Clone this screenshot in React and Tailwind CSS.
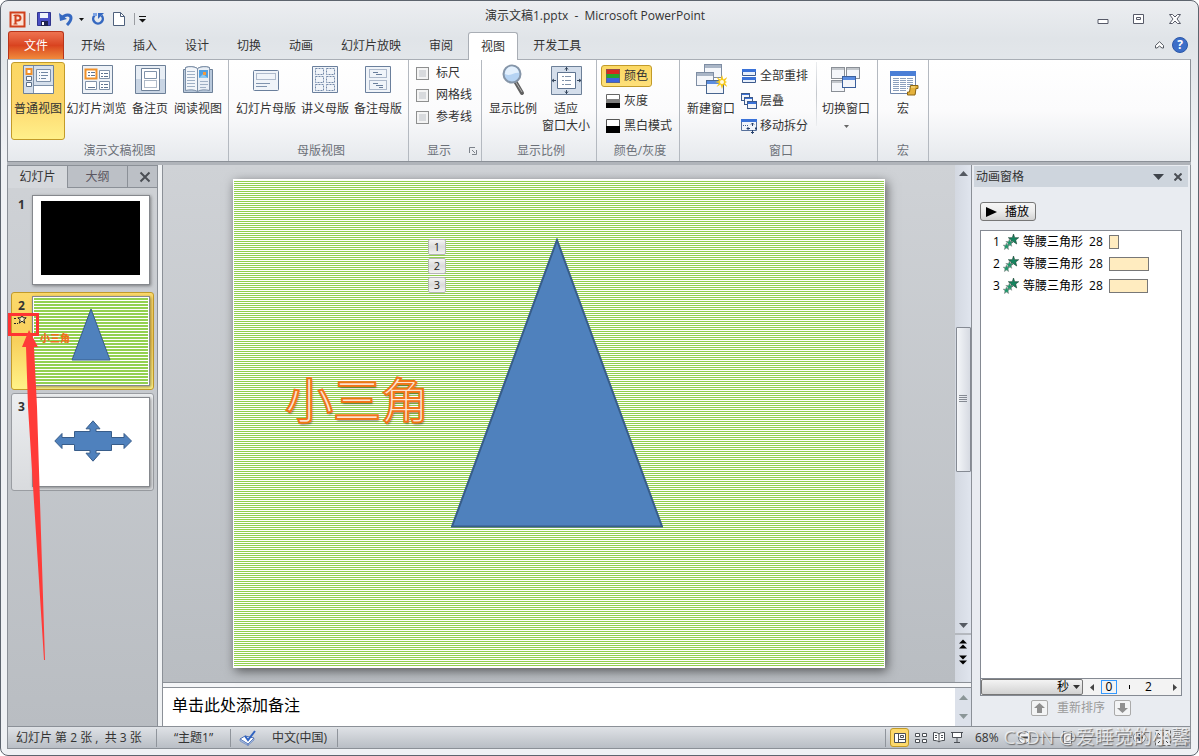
import React from "react";

const TABS = ["开始", "插入", "设计", "切换", "动画", "幻灯片放映", "审阅", "视图", "开发工具"];

const ANIMATIONS = [
  { id: 1, name: "等腰三角形", shape: "28", width: 10 },
  { id: 2, name: "等腰三角形", shape: "28", width: 40 },
  { id: 3, name: "等腰三角形", shape: "28", width: 39 },
];

const FINE_STRIPES =
  "bg-[repeating-linear-gradient(to_bottom,#fff_0px,#fff_1px,#92d050_1px,#92d050_2px)]";
const THUMB_STRIPES =
  "bg-[repeating-linear-gradient(to_bottom,#92d050_0px,#92d050_2px,#fff_2px,#fff_3px)]";

const Svg = ({ w = 32, h = 32, children, className = "" }) => (
  <svg
    width={w}
    height={h}
    viewBox={`0 0 ${w} ${h}`}
    fill="none"
    aria-hidden="true"
    className={`shrink-0 ${className}`}
  >
    {children}
  </svg>
);

/* ---------- ribbon icons ---------- */

const NormalViewIcon = () => (
  <Svg>
    <path d="M1.5 1.5h30v28h-30z" fill="#d5dfeb" stroke="#6d8098" />
    <path d="M11.5 2v27M11.5 21.5H31" stroke="#7d90a8" />
    <path d="M12 22h19v7H12z" fill="#fff" />
    <path d="M14.500 5.500h14v12h-14z" fill="#f7f9fc" stroke="#7d90a8" />
    <path d="M17 8.500h1m1 0h7M17 11.500h1m1 0h7M17 14.500h1m1 0h5" stroke="#7086a3" />
    <path d="M4.500 5h5v5h-5z" fill="#fff" stroke="#f09028" strokeWidth="2" />
    <path d="M4.500 12.500h5v4h-5zM4.500 18.500h5v4h-5z" fill="#fff" stroke="#5d7088" />
  </Svg>
);

const SorterIcon = () => (
  <Svg>
    <path d="M1.500 1.500h30v28h-30z" fill="#eef2f7" stroke="#6d8098" />
    <path d="M18.500 6.500h10v8h-10zM4.500 17.500h11v8h-11zM18.500 17.500h10v8h-10z" fill="#fff" stroke="#8193aa" />
    <path d="M4.500 5.500h11v9h-11z" fill="#fff" stroke="#f09028" strokeWidth="2" />
    <path d="M7 8.500h2m1 0h4M7 11.500h2m1 0h4M20 9.500h2m1 0h4M20 12.500h2m1 0h4M7 23.500h7M20 20.500h2m1 0h4M20 23.500h2m1 0h4" stroke="#5f7490" />
  </Svg>
);

const NotesPageIcon = () => (
  <Svg>
    <path d="M1.500 1.500h30v28h-30z" fill="#c9d5e4" stroke="#6d8098" />
    <path d="M2 2h29v13H2z" fill="#e8eef5" />
    <path d="M7.500 4.500h18v22h-18z" fill="#fff" stroke="#6d8098" />
    <path d="M10.500 7.500h12v7h-12z" stroke="#8193aa" />
    <path d="M10.500 16.500h12v7h-12z" stroke="#5f7490" strokeDasharray="1 1" />
  </Svg>
);

const ReadingIcon = () => (
  <Svg>
    <path d="M1.500 5.500h2v-2c4-1.500 9-1 12 1 3-2 8-2.500 12-1v2h3v23h-29z" fill="#b9c9dc" stroke="#6d8098" />
    <path d="M3.500 3.500c4-1.500 9-1 12 1v23c-3-2-8-2-12-1z" fill="#f3f6fa" stroke="#7d90a8" />
    <path d="M15.500 4.500c3-2 8-2.500 12-1v23c-4-1-9-1-12 1z" fill="#e9eff6" stroke="#7d90a8" />
    <path d="M17 6h9v8h-9z" fill="#4e9fe0" />
    <path d="M17 14l4-4 5 4z" fill="#8cc8f0" />
    <path d="M21 8h3v3h-3z" fill="#f39a3e" />
    <path d="M5 7.500h8M5 10.500h8M5 13.500h8M5 16.500h8M5 19.500h8M5 22.500h8M18 17.500h8M18 20.500h8M18 23.500h6" stroke="#9fb0c5" />
  </Svg>
);

const SlideMasterIcon = () => (
  <Svg>
    <rect x="3.500" y="6.500" width="25" height="20" rx="1" fill="#f0f4f9" stroke="#6a7f9c" />
    <path d="M6.500 9.500h19v6h-19z" stroke="#6a7f9c" strokeDasharray="1 1" />
    <path d="M6 19.500h14M6 22.500h11" stroke="#7f93ae" />
  </Svg>
);

const HandoutIcon = () => (
  <Svg>
    <path d="M3.500 2.500h25v26h-25z" fill="#f0f4f9" stroke="#6a7f9c" />
    <path
      d="M6.500 4.500h8v6h-8zM17.500 4.500h8v6h-8zM6.500 12.500h8v6h-8zM17.500 12.500h8v6h-8zM6.500 20.500h8v6h-8zM17.500 20.500h8v6h-8z"
      stroke="#7389a8"
      strokeDasharray="2 1"
    />
  </Svg>
);

const NotesMasterIcon = () => (
  <Svg>
    <path d="M3.500 2.500h25v26h-25z" fill="#f0f4f9" stroke="#6a7f9c" />
    <path d="M7.500 5.500h17v8h-17zM7.500 16.500h17v9h-17z" stroke="#6a7f9c" strokeDasharray="1 1" />
    <path d="M11 8.500h5m-2 2h6M11 19.500h5m-2 2h7m-4 2h4" stroke="#6a7f9c" />
  </Svg>
);

const ZoomIcon = () => (
  <Svg>
    <path d="M18 17l7 12" stroke="#606060" strokeWidth="4" strokeLinecap="round" />
    <path d="M18 17l7 11" stroke="#b0b0b0" strokeWidth="1" />
    <circle cx="15" cy="10" r="8.500" fill="#b5d3f3" stroke="#8595a8" strokeWidth="2" />
    <path d="M8 10a7 7 0 0 1 14-1c-5-1-8 4-14 1z" fill="#e3f0fd" />
  </Svg>
);

const FitIcon = () => (
  <Svg>
    <path d="M1.500 2.500h30v28h-30z" fill="#d4deeb" stroke="#6d8098" />
    <path d="M7.500 8.500h18v16h-18z" fill="#fff" stroke="#5f7490" />
    <path d="M12 12.500h2m1 0h6M12 16.500h2m1 0h6M12 20.500h2m1 0h6" stroke="#8193aa" />
    <path d="M16.500 3v4M15 5.500l1.500-2 1.500 2M16.500 26v4M15 27.500l1.500 2 1.500-2M2 16.500h4M4 15l-2 1.500L4 18M27 16.500h4M29 15l2 1.500-2 1.500" stroke="#35465c" />
  </Svg>
);

const Pane = ({ x, y, w, h, color, bar, barHeight = 3 }) => (
  <g>
    <rect x={x + 0.5} y={y + 0.5} width={w} height={h} fill="#f4f6fa" stroke={color} />
    <rect x={x + 1} y={y + 1} width={w - 1} height={barHeight} fill={bar} />
  </g>
);

const NewWindowIcon = () => (
  <Svg>
    <Pane x={9} y={0} w={17} h={13} color="#7e8da3" bar="#a9b5c6" />
    <Pane x={1} y={8} w={17} h={13} color="#7e8da3" bar="#a9b5c6" />
    <Pane x={11} y={16} w={17} h={13} color="#48658f" bar="#5a8ce0" />
    <path d="M27 11l1.500 4.500 4-2.500-2.500 4 2 1-2 1 2.500 4-4-2.500-1.500 4.500-1.500-4.500-4 2.500 2.500-4-4-1 4-1-2.500-4 4 2.500z" fill="#f8c91c" />
    <circle cx="27" cy="18" r="2" fill="#fffbe0" />
  </Svg>
);

const SwitchIcon = () => (
  <Svg>
    <Pane x={1} y={3} w={13} h={11} color="#8a8f96" bar="#c2c6cb" barHeight={2} />
    <Pane x={16} y={3} w={13} h={11} color="#8a8f96" bar="#c2c6cb" barHeight={2} />
    <Pane x={1} y={16} w={13} h={11} color="#8a8f96" bar="#c2c6cb" barHeight={2} />
    <Pane x={12} y={12} w={13} h={11} color="#3a5f9c" bar="#5a8ce0" />
  </Svg>
);

const MacroIcon = () => (
  <Svg>
    <path d="M3.500 7.500h25v22h-25z" fill="#fff" stroke="#6f86ab" />
    <path d="M3 7h26v5H3z" fill="#4b7fd6" />
    <path d="M6 14.500h20M6 16.500h20M6 18.500h20M6 20.500h20M6 22.500h20M6 24.500h15M6 26.500h13" stroke="#8ca0bd" strokeDasharray="6 1" />
    <path d="M23.500 21.500h7.500v3h-2l-1 6.500h-7.500v-3h2z" fill="#e5b23c" stroke="#8d6714" />
    <path d="M24 23h4" stroke="#fbe39a" />
  </Svg>
);

const ArrangeIcon = () => (
  <Svg w={16} h={16}>
    <path d="M1.500 1.500h13v6h-13zM1.500 9.500h13v5h-13z" fill="#e8f0fb" stroke="#3c5a8c" />
    <path d="M1 1h14v3H1zM1 9h14v3H1z" fill="#3a72d8" />
  </Svg>
);

const CascadeIcon = () => (
  <Svg w={16} h={16}>
    <Pane x={0} y={0} w={8} h={7} color="#3c5a8c" bar="#3a72d8" barHeight={1} />
    <Pane x={3} y={4} w={8} h={7} color="#3c5a8c" bar="#3a72d8" barHeight={1} />
    <Pane x={6} y={8} w={9} h={7} color="#3c5a8c" bar="#3a72d8" barHeight={2} />
  </Svg>
);

const MoveSplitIcon = () => (
  <Svg w={16} h={16}>
    <path d="M.5 1.500h15v11H.5z" fill="#f0f4fa" stroke="#56709a" />
    <path d="M0 1h16v3H0z" fill="#3a72d8" />
    <path d="M2 7.500h6" stroke="#3c5a8c" strokeDasharray="1 1" />
    <path d="M11.500 5v3M10 6.500l1.500-1.500L13 6.500M11.500 12v3.500M10 14l1.500 1.500L13 14M6 10.500h3M7.500 9L6 10.500 7.500 12M14 10.500h2M14.500 9l1.500 1.500-1.500 1.500" stroke="#26406b" />
  </Svg>
);

const ColorIcon = () => (
  <Svg w={16} h={16}>
    <path d="M1 1h14v14H1z" fill="#3c65e0" />
    <path d="M1 1h14v5H1z" fill="#d62a20" />
    <path d="M1 6h14v4H1z" fill="#27a52c" />
    <path d="M1.500 1.500h13v13h-13z" stroke="#666" strokeOpacity=".6" />
  </Svg>
);

const GrayIcon = () => (
  <Svg w={16} h={16}>
    <path d="M1.500 1.500h13v13h-13z" fill="#fff" stroke="#666" />
    <path d="M1 6h14v5H1z" fill="#808080" />
    <path d="M1 10h14v5H1z" fill="#000" />
  </Svg>
);

const BlackWhiteIcon = () => (
  <Svg w={16} h={16}>
    <path d="M1.500 1.500h13v13h-13z" fill="#fff" stroke="#555" />
    <path d="M1 8h14v7H1z" fill="#000" />
  </Svg>
);

/* ---------- ribbon building blocks ---------- */

const Group = ({ label, className, children, launcher }) => (
  <section
    aria-label={label}
    className={`flex flex-col shrink-0 border-r border-[#b4b9c0] ${className}`}
  >
    <div className="flex flex-1 pt-[2px]">{children}</div>
    <div className="flex items-center h-5 text-[#6b7078]">
      <span className="flex-1 text-center">{label}</span>
      {launcher && (
        <button aria-label="显示选项" className="pr-1">
          <Svg w={8} h={8}>
            <path d="M.5 6V.5H6M3 3l3 3M7.500 3v4.500H3" stroke="#7c828a" />
          </Svg>
        </button>
      )}
    </div>
  </section>
);

const BigButton = ({ icon, children, active, className = "" }) => (
  <button
    className={`flex flex-col items-center h-[78px] pt-px leading-[17px] whitespace-nowrap border rounded-[3px] ${
      active
        ? "border-[#c29b29] bg-linear-to-b from-[#fbd863] via-[#fdd56b] to-[#fff08a]"
        : "border-transparent"
    } ${className}`}
  >
    {icon}
    <span className="mt-1">{children}</span>
  </button>
);

const SmallButton = ({ icon, children, active }) => (
  <button
    className={`flex items-center gap-[3px] h-[22px] px-[3px] whitespace-nowrap border rounded-[3px] ${
      active ? "border-[#c29b29] bg-linear-to-b from-[#fbd863] to-[#fee07a]" : "border-transparent"
    }`}
  >
    {icon}
    {children}
  </button>
);

const Check = ({ id, children }) => (
  <div className="flex items-center gap-[7px] h-[22px]">
    <input
      type="checkbox"
      id={id}
      className="appearance-none w-[13px] h-[13px] border border-[#8e8f8f] bg-[#d8dadd] shadow-[inset_0_0_0_2px_#f4f4f4]"
    />
    <label htmlFor={id}>{children}</label>
  </div>
);

const TitleBar = () => (
  <header className="flex h-7 px-2">
    <div className="flex flex-1 items-center pt-1 gap-[7px]">
      <Svg w={17} h={17}>
        <path d="M1.500 1.500h14v14h-14z" fill="#fbe3d6" stroke="#d0401c" strokeWidth="2" />
        <path d="M6.500 13V4.500H9a2.500 2.500 0 0 1 0 5H7" stroke="#d0401c" strokeWidth="2" />
        <path d="M4.500 4.500h3M4.500 13h4" stroke="#d0401c" />
      </Svg>
      <span className="w-px h-3 -ml-1 bg-[#9a9da2]" />
      <button aria-label="保存">
        <Svg w={14} h={14}>
          <path d="M.5.5h13v13H.5z" fill="#4a4fc4" stroke="#30348c" />
          <path d="M3 1h8v5H3z" fill="#f0f3fb" />
          <path d="M4 9h7v5H4z" fill="#1f2350" />
          <path d="M5 10h2v3H5z" fill="#fff" />
        </Svg>
      </button>
      <button aria-label="撤消" className="flex items-center gap-[6px] pl-px">
        <Svg w={14} h={14}>
          <path d="M3 6c3-4 9-4 9 0 0 3-2 5-4 7" stroke="#3568c0" strokeWidth="3" />
          <path d="M0 1l1 8 7-2z" fill="#3568c0" />
        </Svg>
        <Svg w={5} h={3}>
          <path d="M0 0h5L2.500 3z" fill="#111" />
        </Svg>
      </button>
      <button aria-label="重复">
        <Svg w={14} h={14}>
          <path d="M3.500 3.500a4.800 4.800 0 1 0 7 0" stroke="#3568c0" strokeWidth="2.500" />
          <path d="M7 1h6l-6 6z" fill="#3568c0" />
          <path d="M2 1h4v3H2z" fill="#7ea4e4" />
        </Svg>
      </button>
      <button aria-label="新建" className="px-px">
        <Svg w={12} h={14}>
          <path d="M.5.5h7l4 4v9H.5z" fill="#fff" stroke="#4e607c" />
          <path d="M7.500.5v4h4" stroke="#4e607c" />
        </Svg>
      </button>
      <span className="w-px h-3 ml-px bg-[#9a9da2]" />
      <button aria-label="自定义快速访问工具栏" className="-ml-1">
        <Svg w={8} h={7}>
          <path d="M1 .5h7" stroke="#111" />
          <path d="M1 3h7L4.500 6.500z" fill="#111" />
        </Svg>
      </button>
    </div>
    <h1 className="pt-[3px] leading-5 whitespace-pre">演示文稿1.pptx  -  Microsoft PowerPoint</h1>
    <div className="flex flex-1 items-center justify-end gap-6 pr-[9px] pt-1">
      <button aria-label="最小化">
        <Svg w={12} h={12}>
          <path d="M1 6.500h10v4H1z" fill="#fff" stroke="#575a68" />
        </Svg>
      </button>
      <button aria-label="还原">
        <Svg w={12} h={12}>
          <path d="M.5 1.500h10v9H.5z" fill="#fff" stroke="#575a68" />
          <path d="M3.500 4.500h4v2h-4z" stroke="#575a68" />
        </Svg>
      </button>
      <button aria-label="关闭">
        <Svg w={12} h={12}>
          <path d="M.5 1.500h3L6 4l2.500-2.500h3L8 6l3.500 4.500h-3L6 8l-2.500 2.500h-3L4 6z" fill="#fff" stroke="#575a68" />
        </Svg>
      </button>
    </div>
  </header>
);

const TabStrip = () => (
  <nav className="flex items-end h-7 pl-[7px] pr-2">
    <button className="w-14 h-7 mr-[3px] pt-px rounded-t-[3px] border border-b-0 border-[#b8341a] bg-linear-to-b from-[#ee7350] via-[#d9431f] to-[#f08a3c] text-white">
      文件
    </button>
    {TABS.map((tab) =>
      tab === "视图" ? (
        <button
          key={tab}
          className="relative h-7 -mb-px mx-px px-3 rounded-t-[3px] border border-b-0 border-[#a9aeb5] bg-white"
        >
          {tab}
        </button>
      ) : (
        <button key={tab} className="h-7 px-[14px] pt-[2px]">
          {tab}
        </button>
      )
    )}
    <div className="flex flex-1 items-center justify-end gap-2 h-7 pr-[2px]">
      <button aria-label="折叠功能区">
        <Svg w={9} h={8}>
          <path d="M4.500.7L8.500 4.500v2.500h-1.500L4.500 5 2 7H.5V4.500z" fill="#fff" stroke="#555a62" />
        </Svg>
      </button>
      <button
        aria-label="帮助"
        className="w-4 h-4 rounded-full bg-[#3c6ec8] border border-[#2c58a8] text-white font-bold leading-[14px]"
      >
        ?
      </button>
    </div>
  </nav>
);

const Ribbon = () => (
  <div className="flex h-[103px] ml-[6px] mr-[7px] border border-t-[#a9aeb5] border-x-[#8b9097] border-b-[#8b9097] bg-linear-to-b from-white via-[#fbfbfc] to-[#e6e9ed]">
    <Group label="演示文稿视图" className="w-[221px] pl-[3px]">
      <BigButton icon={<NormalViewIcon />} active className="w-[54px]">普通视图</BigButton>
      <BigButton icon={<SorterIcon />} className="w-[63px]">幻灯片浏览</BigButton>
      <BigButton icon={<NotesPageIcon />} className="w-11">备注页</BigButton>
      <BigButton icon={<ReadingIcon />} className="w-[52px]">阅读视图</BigButton>
    </Group>
    <Group label="母版视图" className="w-[180px] pl-[5px]">
      <BigButton icon={<SlideMasterIcon />} className="w-16">幻灯片母版</BigButton>
      <BigButton icon={<HandoutIcon />} className="w-[54px]">讲义母版</BigButton>
      <BigButton icon={<NotesMasterIcon />} className="w-[52px]">备注母版</BigButton>
    </Group>
    <Group label="显示" className="w-[73px]" launcher>
      <div className="flex flex-col pl-[7px]">
        <Check id="ruler">标尺</Check>
        <Check id="grid">网格线</Check>
        <Check id="guides">参考线</Check>
      </div>
    </Group>
    <Group label="显示比例" className="w-[115px] pl-1">
      <BigButton icon={<ZoomIcon />} className="w-[54px]">显示比例</BigButton>
      <BigButton icon={<FitIcon />} className="w-[52px]">
        适应
        <br />
        窗口大小
      </BigButton>
    </Group>
    <Group label="颜色/灰度" className="w-[83px] pl-1">
      <div className="flex flex-col items-start gap-[3px] pt-[3px]">
        <SmallButton icon={<ColorIcon />} active>颜色</SmallButton>
        <SmallButton icon={<GrayIcon />}>灰度</SmallButton>
        <SmallButton icon={<BlackWhiteIcon />}>黑白模式</SmallButton>
      </div>
    </Group>
    <Group label="窗口" className="w-[198px] pl-[5px]">
      <BigButton icon={<NewWindowIcon />} className="w-[52px]">新建窗口</BigButton>
      <div className="flex flex-col items-start gap-[3px] pt-[3px]">
        <SmallButton icon={<ArrangeIcon />}>全部重排</SmallButton>
        <SmallButton icon={<CascadeIcon />}>层叠</SmallButton>
        <SmallButton icon={<MoveSplitIcon />}>移动拆分</SmallButton>
      </div>
      <div className="w-px h-16 ml-1 bg-linear-to-b from-[#eceef0] via-[#c4c8cd] to-[#eceef0]" />
      <BigButton icon={<SwitchIcon />} className="ml-[3px] w-[52px]">
        切换窗口
        <Svg w={5} h={3} className="mx-auto mt-2">
          <path d="M0 0h5L2.500 3z" fill="#666" />
        </Svg>
      </BigButton>
    </Group>
    <Group label="宏" className="w-[51px]">
      <BigButton icon={<MacroIcon />} className="w-full">宏</BigButton>
    </Group>
  </div>
);

/* ---------- slide list ---------- */

const Thumb = ({ number, frame, children }) => (
  <li className={`flex h-[98px] w-[143px] rounded-[3px] border ${frame}`}>
    <div className="w-5 pt-[5px] pl-[6px] text-[#333]">
      <b className="block leading-4">{number}</b>
      {number === 2 && (
        <Svg w={13} h={11} className="-ml-1">
          <path d="M8 .8l1.200 3h3l-2.400 2 1 3.400-2.800-2-2.800 2 1-3.400-2.400-2h3z" fill="#fff3c0" stroke="#222" />
          <path d="M0 1.500h4M0 4.500h2M0 9.500h4" stroke="#222" strokeDasharray="2 1" />
        </Svg>
      )}
    </div>
    <div className="w-[118px] h-[90px] mt-[3px] border border-[#85888d] bg-white p-px shadow-[1px_1px_3px_rgba(0,0,0,.4)]">
      {children}
    </div>
  </li>
);

const SlideList = () => (
  <aside className="flex flex-col w-[150px] shrink-0 border-r border-[#8b9097] bg-linear-to-b from-[#cfd2d6] to-[#b9bdc2]">
    <div className="flex h-[23px] border-t border-[#8b9097]">
      <button className="w-[59px] bg-[#d5d8dc]">幻灯片</button>
      <button className="w-[60px] border-l border-b border-[#8b9097] bg-[#bcc0c6] text-[#5b5560]">大纲</button>
      <button
        aria-label="关闭窗格"
        className="flex flex-1 items-center justify-center pl-1 border-l border-b border-[#8b9097] bg-[#bcc0c6]"
      >
        <Svg w={12} h={12}>
          <path d="M1.500 1.500l9 9M10.500 1.500l-9 9" stroke="#4b4f55" strokeWidth="2" />
        </Svg>
      </button>
    </div>
    <ol className="flex flex-col gap-[3px] pl-[3px] pt-[3px]">
      <Thumb number={1} frame="border-transparent">
        <div className="h-[74px] ml-[7px] mr-[8px] mt-1 bg-black" />
      </Thumb>
      <Thumb number={2} frame="border-[#c29b29] bg-linear-to-b from-[#fbd96b] via-[#f8d05c] to-[#fff287]">
        <div className={`flex h-full ${THUMB_STRIPES}`}>
          <span className="pl-[6px] pt-[34px] text-[10px] leading-[12px] font-black text-[#f0701c]">小三角</span>
          <Svg w={40} h={54} className="mt-[10px] ml-px">
            <path d="M20 1L39 52H1z" fill="#4f81bd" stroke="#385d8a" />
          </Svg>
        </div>
      </Thumb>
      <Thumb number={3} frame="border-[#9a9da2] bg-linear-to-b from-[#eceef0] to-[#d9dbde]">
        <div className="flex h-full items-center justify-center pl-1 pb-[2px]">
          <Svg w={78} h={42}>
            <path
              d="M39 .8l7 8h-4v2.700h15.500v6h12.500v-4l7.500 7.500-7.500 7.500v-4H57.500v6H42v2.700h4l-7 8-7-8h4v-2.700H20.500v-6H8v4L.8 21 8 13.500v4h12.500v-6H36V8.800h-4z"
              fill="#4f81bd"
              stroke="#385d8a"
            />
          </Svg>
        </div>
      </Thumb>
    </ol>
  </aside>
);

/* ---------- slide canvas ---------- */

const Slide = () => (
  <div className={`relative w-full border border-white shadow-[2px_3px_10px_rgba(0,0,0,.55)] ${FINE_STRIPES}`}>
    <svg
      width="212"
      height="290"
      viewBox="0 0 212 290"
      className="absolute left-[217px] top-[58px]"
      role="img"
      aria-label="等腰三角形 28"
    >
      <path d="M106 2L211 288.500H1z" fill="#4f81bd" stroke="#385d8a" strokeWidth="2" />
    </svg>
    <div className="absolute left-[194px] top-[59px] flex flex-col gap-[3px]">
      {ANIMATIONS.map(({ id }) => (
        <span
          key={id}
          className="w-[18px] h-[16px] rounded-[2px] border border-[#b5b5b5] bg-linear-to-b from-[#f4f4f4] via-[#dadada] to-[#f2f2f2] text-center text-[11px] leading-[14px] text-[#222]"
        >
          {id}
        </span>
      ))}
    </div>
    <span className="absolute left-[51px] top-[186px] text-[48px] leading-[68px] text-[#fde5d2] [-webkit-text-stroke:2px_#f0761a] [text-shadow:1px_2px_2px_rgba(0,0,0,.45)]">
      小三角
    </span>
  </div>
);

const Triangle = ({ up, color = "#555a62" }) => (
  <Svg w={9} h={5}>
    <path d={up ? "M0 5h9L4.500 0z" : "M0 0h9L4.500 5z"} fill={color} />
  </Svg>
);

const VerticalScroll = () => (
  <div className="flex flex-col items-center w-4 shrink-0 bg-linear-to-r from-[#d3d8e1] to-[#e0e5ee]">
    <button aria-label="向上滚动" className="h-4">
      <Triangle up />
    </button>
    <div className="flex-1" />
    <div className="flex items-center justify-center w-[15px] h-[145px] border border-[#858a93] rounded-[1px] bg-linear-to-r from-[#f4f6f9] to-[#d6dae2]">
      <Svg w={8} h={8}>
        <path d="M0 .5h8M0 2.500h8M0 4.500h8M0 6.500h8" stroke="#858a93" />
      </Svg>
    </div>
    <div className="flex-1" />
    <button aria-label="向下滚动" className="h-4">
      <Triangle />
    </button>
    <div className="flex flex-col items-center gap-[6px] w-full h-[49px] pt-1 border-t-2 border-[#b4b8be]">
      <button aria-label="上一张幻灯片">
        <Svg w={8} h={10}>
          <path d="M0 4.500h8L4 .5zM0 9.500h8L4 5.500z" fill="#000" />
        </Svg>
      </button>
      <button aria-label="下一张幻灯片">
        <Svg w={8} h={10}>
          <path d="M0 .5h8l-4 4zM0 5.500h8l-4 4z" fill="#000" />
        </Svg>
      </button>
    </div>
  </div>
);

const Editor = () => (
  <main className="flex flex-col flex-1 min-w-0 ml-1 border-l border-[#8b9097]">
    <div className="flex flex-1">
      <div className="flex flex-1 px-[70px] py-[14px] bg-linear-to-b from-[#cfd2d6] to-[#b9bdc2]">
        <Slide />
      </div>
      <VerticalScroll />
    </div>
    <div className="h-[6px] border-y border-[#8b9097] bg-[#f4f5f7]" />
    <div className="flex h-[38px] bg-white">
      <textarea
        aria-label="备注"
        defaultValue="单击此处添加备注"
        className="flex-1 pl-[9px] pt-[7px] text-base leading-5 text-black resize-none outline-none overflow-hidden"
      />
      <div className="flex flex-col items-center justify-between w-4 py-[7px] bg-[#dce1ea]">
        <Triangle up color="#8b9698" />
        <Triangle color="#8b9698" />
      </div>
    </div>
  </main>
);

/* ---------- animation pane ---------- */

const AnimationPane = () => (
  <aside className="flex flex-col w-[220px] shrink-0 border-x border-[#8b9097] bg-[#e9ecf1] text-black">
    <div className="flex items-center h-[21px] mt-px mx-[2px] pl-[2px] pr-[6px] bg-[#ced5dd] text-[#333]">
      <h2 className="flex-1 pt-px">动画窗格</h2>
      <button aria-label="窗格选项" className="mr-[10px]">
        <Svg w={11} h={6}>
          <path d="M0 0h11L5.500 6z" fill="#3f444b" />
        </Svg>
      </button>
      <button aria-label="关闭">
        <Svg w={8} h={8}>
          <path d="M.5.5l7 7M7.500.5l-7 7" stroke="#4b4f55" strokeWidth="2" />
        </Svg>
      </button>
    </div>
    <div className="flex flex-col flex-1 px-2 pt-[15px] pb-[6px]">
      <button className="flex items-center self-start gap-2 h-[19px] w-14 pl-1 border border-[#777] rounded-[3px] bg-linear-to-b from-[#f6f6f6] via-[#ececec] to-[#d2d2d2] whitespace-nowrap">
        <Svg w={12} h={10}>
          <path d="M1 0v10l11-5z" fill="#000" />
        </Svg>
        播放
      </button>
      <ol className="flex-1 mt-[9px] border border-[#858a93] bg-white">
        {ANIMATIONS.map((item) => (
          <li key={item.id} className="flex items-center h-[22px] pl-3">
            <span className="w-2">{item.id}</span>
            <Svg w={16} h={16} className="ml-[2px]">
              <path d="M10.500 0l1.200 3.700h4l-3 2.300 1 4-3.200-2.200-3.200 2.200 1-4-3-2.300h4z" fill="#14855f" stroke="#143c2c" strokeWidth=".6" />
              <path d="M6.500 5l1 2.500h2.700L8 9.300l.8 3-2.300-1.600-2.300 1.600.8-3-2.200-1.800h2.700z" fill="#1a9a6c" stroke="#888" strokeWidth=".6" />
              <path d="M3.500 9l.9 2.200h2.400L5 12.800l.6 2.700-2.100-1.400-2.100 1.400.6-2.700L.2 11.200h2.400z" fill="#1a9a6c" stroke="#888" strokeWidth=".6" />
            </Svg>
            <span className="ml-1">{item.name}</span>
            <span className="w-5 ml-[6px]">{item.shape}</span>
            <span
              className="h-[14px] border border-[#777] bg-[#ffecc0]"
              style={{ width: item.width }}
            />
          </li>
        ))}
      </ol>
      <div className="flex items-center h-[17px] border border-t-0 border-[#858a93] bg-[#f3f3f3]">
        <button className="flex items-center justify-end gap-1 w-[102px] h-4 pr-[2px] border border-[#777] rounded-[2px] bg-linear-to-b from-[#f4f4f4] to-[#d2d2d2]">
          秒
          <Svg w={7} h={4}>
            <path d="M0 0h7L3.500 4z" fill="#333" />
          </Svg>
        </button>
        <button aria-label="向左" className="w-[18px] flex justify-center">
          <Svg w={4} h={7}>
            <path d="M4 0v7L0 3.500z" fill="#444" />
          </Svg>
        </button>
        <span className="w-4 h-[14px] border border-[#3399ff] text-center leading-3">0</span>
        <span className="w-px h-1 mx-3 bg-black" />
        <span className="flex-1 pl-[3px]">2</span>
        <button aria-label="向右" className="pr-1">
          <Svg w={4} h={7}>
            <path d="M0 0v7l4-3.500z" fill="#444" />
          </Svg>
        </button>
      </div>
      <div className="flex items-center justify-center gap-[9px] h-6 text-[#9a9a9a]">
        <button disabled aria-label="上移" className="flex items-center justify-center w-[17px] h-4 rounded-[2px] border border-[#aaa] bg-[#f3f4f5]">
          <Svg w={11} h={10}>
            <path d="M5.500 0L11 5H8v5H3V5H0z" fill="#8f8f8f" />
          </Svg>
        </button>
        重新排序
        <button disabled aria-label="下移" className="flex items-center justify-center w-[17px] h-4 rounded-[2px] border border-[#aaa] bg-[#f3f4f5]">
          <Svg w={11} h={10}>
            <path d="M5.500 10L11 5H8V0H3v5H0z" fill="#8f8f8f" />
          </Svg>
        </button>
      </div>
    </div>
  </aside>
);

/* ---------- status bar ---------- */

const Divider = () => <span className="w-px h-[18px] bg-[#8f949b]" />;

const StatusBar = () => (
  <footer className="relative flex items-center h-[23px] ml-[6px] mr-[7px] border border-[#8b9097] bg-linear-to-b from-[#dfe2e6] to-[#b9bec5] whitespace-nowrap">
    <span className="w-[148px] pl-2 whitespace-pre">幻灯片 第 2 张 ,  共 3 张</span>
    <Divider />
    <span className="w-[73px] text-center">“主题1”</span>
    <Divider />
    <button className="flex items-center gap-[15px] w-[106px] pl-2">
      <Svg w={18} h={16}>
        <path d="M1 9l5-3 9 2-6 6z" fill="#fff" stroke="#4a6fb5" />
        <path d="M1 9l8 5v1.500L1 11zM9 14l6-6v2l-6 5.500z" fill="#a9bde0" stroke="#4a6fb5" strokeWidth=".5" />
        <path d="M6 6l3 4 7-9" stroke="#2f62c0" strokeWidth="2" />
      </Svg>
      中文(中国)
    </button>
    <Divider />
    <span className="flex-1" />
    <Divider />
    <div className="flex items-center gap-[6px] pl-1">
      <button aria-label="普通视图" className="flex items-center justify-center w-[19px] h-[19px] rounded-[3px] border border-[#c29b29] bg-[#fdd96b]">
        <Svg w={12} h={10}>
          <path d="M.5.500h11v9H.5zM4.500.500v9M4.500 6.500h7M6.500 2.500h3v2h-3z" fill="#fff" stroke="#4b4f55" />
        </Svg>
      </button>
      <button aria-label="幻灯片浏览">
        <Svg w={12} h={10}>
          <path d="M.5.500h4v3h-4zM7.500.500h4v3h-4zM.5 6.500h4v3h-4zM7.500 6.500h4v3h-4z" fill="#fff" stroke="#4b4f55" />
        </Svg>
      </button>
      <button aria-label="阅读视图">
        <Svg w={12} h={11}>
          <path d="M.5.500c2 0 4 0 5.500 1.500C7.500.500 9.500.500 11.500.500v8c-2 0-4 0-5.500 1.500C4.500 8.500 2.500 8.500.5 8.500zM6 2v8M2 3.500h2M2 5.500h2M8 3.500h2M8 5.500h2" fill="#fff" stroke="#4b4f55" />
        </Svg>
      </button>
      <button aria-label="幻灯片放映">
        <Svg w={12} h={11}>
          <path d="M0 .500h12M1.500 1v4.500h9V1M6 6v4M3 10.500h6" fill="#fff" stroke="#4b4f55" />
        </Svg>
      </button>
    </div>
    <button className="w-[52px] pl-3 text-left">68%</button>
    <div className="flex items-center">
      <button aria-label="缩小" className="ml-[2px]">
        <Svg w={15} h={15}>
          <circle cx="7.500" cy="7.500" r="6" fill="#f4f5f7" stroke="#71767e" />
          <path d="M4 7.500h7" stroke="#444" strokeWidth="2" />
        </Svg>
      </button>
      <input
        type="range"
        aria-label="显示比例"
        defaultValue="34"
        className="appearance-none w-[100px] h-px bg-[#777c84] [&::-webkit-slider-thumb]:appearance-none [&::-webkit-slider-thumb]:w-[9px] [&::-webkit-slider-thumb]:h-[13px] [&::-webkit-slider-thumb]:bg-[#f4f5f7] [&::-webkit-slider-thumb]:border [&::-webkit-slider-thumb]:border-[#71767e]"
      />
      <button aria-label="放大">
        <Svg w={15} h={15}>
          <circle cx="7.500" cy="7.500" r="6" fill="#f4f5f7" stroke="#71767e" />
          <path d="M4 7.500h7M7.500 4v7" stroke="#444" strokeWidth="2" />
        </Svg>
      </button>
      <button aria-label="适应窗口" className="mx-2">
        <Svg w={16} h={16}>
          <path d="M.5.500h15v15H.5z" fill="#e8eaed" stroke="#666" strokeDasharray="3 2" />
          <path d="M8 2v4M8 10v4M2 8h4M10 8h4M3 3l2 2M13 3l-2 2M3 13l2-2M13 13l-2-2" stroke="#444" />
        </Svg>
      </button>
      <Svg w={11} h={11} className="mt-2">
        <path d="M8 0h2v2H8zM4 4h2v2H4zM8 4h2v2H8zM0 8h2v2H0zM4 8h2v2H4zM8 8h2v2H8z" fill="#8fa0b8" />
      </Svg>
    </div>
    <span className="absolute right-0 top-[-4px] text-[19px] leading-[28px] text-[#ffffffb0] [text-shadow:1px_1px_1px_#555c]">
      CSDN @爱睡觉的小馨
    </span>
  </footer>
);

const Annotation = () => (
  <svg
    width="42"
    height="350"
    viewBox="0 0 42 350"
    className="absolute left-[6px] top-[311px] pointer-events-none"
    aria-hidden="true"
  >
    <path d="M2.500 2.500h28v20h-28z" fill="none" stroke="#ff3333" strokeWidth="3" />
    <path d="M22 18l9 17-4 0 3 60 8 253h-1L21 95l-2-60-4 0z" fill="#ff3b38" />
  </svg>
);

const App = () => (
  <div className="bg-white">
    <div className="relative flex flex-col min-h-screen pt-[2px] pb-[6px] rounded-lg border border-[#5d646e] bg-linear-to-b from-[#eceef1] via-[#e0e4e8] via-5% to-[#eff1f4] to-20% text-xs text-[#333] font-['Open_Sans','Noto_Sans_CJK_SC',sans-serif]">
      <TitleBar />
      <TabStrip />
      <Ribbon />
      <div className="flex flex-1 flex-col ml-[6px] mr-[7px] pt-[3px] bg-[#b0b4ba]">
        <div className="flex flex-1 border-l border-[#8b9097] bg-[#f0f2f4]">
          <SlideList />
          <Editor />
          <AnimationPane />
        </div>
      </div>
      <StatusBar />
      <Annotation />
    </div>
  </div>
);

export default App;
